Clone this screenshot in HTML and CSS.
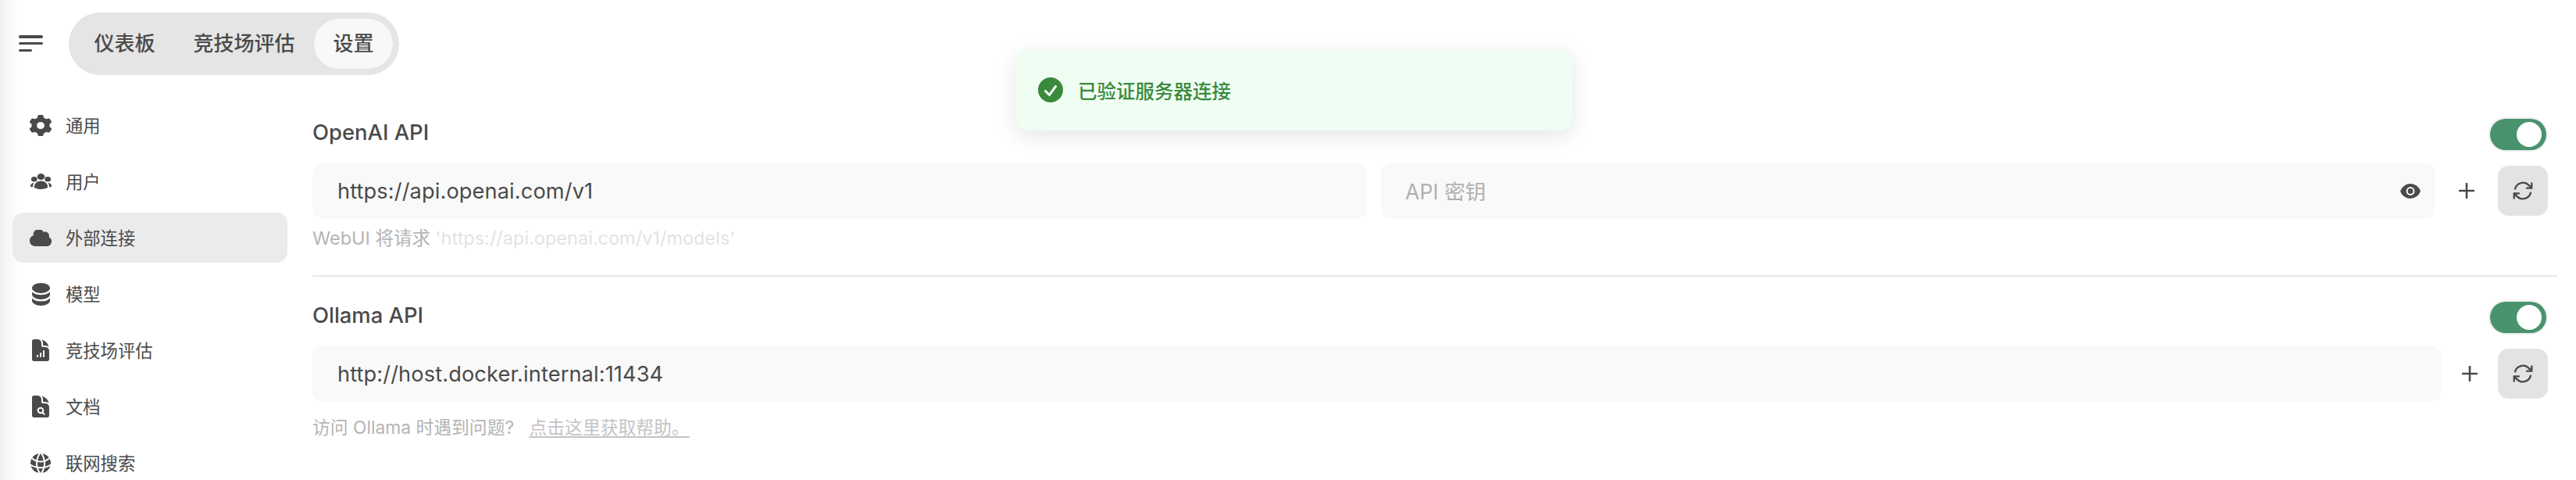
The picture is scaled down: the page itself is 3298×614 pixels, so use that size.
FILE: index.html
```html
<!DOCTYPE html>
<html lang="zh-CN">
<head>
<meta charset="utf-8">
<title>设置</title>
<link rel="stylesheet" href="styles.css">
</head>
<body>
<div class="app">
  <header class="topbar">
    <button class="menu-btn" aria-label="菜单"><span class="bar"></span><span class="bar"></span><span class="bar bar-short"></span></button>
    <nav class="tabs">
      <a class="tab">仪表板</a>
      <a class="tab">竞技场评估</a>
      <a class="tab tab-active">设置</a>
    </nav>
  </header>
  <div class="main">
    <aside class="sidebar">
      <a class="side-item"><span class="side-icon"><svg class="ic-cog" viewBox="1.5 1 17 18" preserveAspectRatio="none"><path fill-rule="evenodd" d="M7.84 1.804A1 1 0 0 1 8.82 1h2.36a1 1 0 0 1 .98.804l.331 1.652a6.993 6.993 0 0 1 1.929 1.115l1.598-.54a1 1 0 0 1 1.186.447l1.18 2.044a1 1 0 0 1-.205 1.251l-1.267 1.113a7.047 7.047 0 0 1 0 2.228l1.267 1.113a1 1 0 0 1 .206 1.25l-1.18 2.045a1 1 0 0 1-1.187.447l-1.598-.54a6.993 6.993 0 0 1-1.929 1.115l-.33 1.652a1 1 0 0 1-.98.804H8.82a1 1 0 0 1-.98-.804l-.331-1.652a6.993 6.993 0 0 1-1.929-1.115l-1.598.54a1 1 0 0 1-1.186-.447l-1.18-2.044a1 1 0 0 1 .205-1.251l1.267-1.114a7.05 7.05 0 0 1 0-2.227L1.821 7.773a1 1 0 0 1-.206-1.25l1.18-2.045a1 1 0 0 1 1.187-.447l1.598.54A6.992 6.992 0 0 1 7.51 3.456l.33-1.652ZM10 13a3 3 0 1 0 0-6 3 3 0 0 0 0 6Z"/></svg></span><span class="side-label">通用</span></a>
      <a class="side-item"><span class="side-icon"><svg class="ic-users" viewBox="1.5 3 21 18.75" preserveAspectRatio="none"><path d="M8.25 6.75a3.75 3.75 0 117.5 0 3.75 3.75 0 01-7.5 0zM15.75 9.75a3 3 0 116 0 3 3 0 01-6 0zM2.25 9.75a3 3 0 116 0 3 3 0 01-6 0zM6.31 15.117A6.745 6.745 0 0112 12a6.745 6.745 0 016.709 7.498.75.75 0 01-.372.568A12.696 12.696 0 0112 21.75c-2.305 0-4.47-.612-6.337-1.684a.75.75 0 01-.372-.568 6.787 6.787 0 011.019-4.38z"/><path d="M5.082 14.254a8.287 8.287 0 00-1.308 5.135 9.687 9.687 0 01-1.764-.44l-.115-.04a.563.563 0 01-.373-.487l-.01-.121a3.75 3.75 0 013.57-4.047zM20.226 19.389a8.287 8.287 0 00-1.308-5.135 3.75 3.75 0 013.57 4.047l-.01.121a.563.563 0 01-.373.486l-.115.04c-.567.2-1.156.349-1.764.441z"/></svg></span><span class="side-label">用户</span></a>
      <a class="side-item side-active"><span class="side-icon"><svg class="ic-cloud" viewBox="1 3.5 18 13.5" preserveAspectRatio="none"><path d="M1 12.5A4.5 4.5 0 0 0 5.5 17H15a4 4 0 0 0 1.866-7.539 3.504 3.504 0 0 0-4.504-4.272A4.5 4.5 0 0 0 4.06 8.235 4.502 4.502 0 0 0 1 12.5Z"/></svg></span><span class="side-label">外部连接</span></a>
      <a class="side-item"><span class="side-icon"><svg class="ic-db" viewBox="3 1 14 18" preserveAspectRatio="none"><path d="M10 1c3.866 0 7 1.79 7 4s-3.134 4-7 4-7-1.79-7-4 3.134-4 7-4zm5.694 8.13c.464-.264.91-.583 1.306-.952V10c0 2.21-3.134 4-7 4s-7-1.79-7-4V8.178c.396.37.842.688 1.306.953C5.838 10.006 7.854 10.5 10 10.5s4.162-.494 5.694-1.37zM3 13.179V15c0 2.21 3.134 4 7 4s7-1.79 7-4v-1.822c-.396.37-.842.688-1.306.953-1.532.875-3.548 1.369-5.694 1.369s-4.162-.494-5.694-1.37A7.009 7.009 0 013 13.179z"/></svg></span><span class="side-label">模型</span></a>
      <a class="side-item"><span class="side-icon"><svg class="ic-doc" viewBox="3.75 1.5 16.5 21" preserveAspectRatio="none"><path fill-rule="evenodd" d="M5.625 1.5c-1.036 0-1.875.84-1.875 1.875v17.25c0 1.035.84 1.875 1.875 1.875h12.75c1.035 0 1.875-.84 1.875-1.875V12.75A3.75 3.75 0 0016.5 9h-1.875a1.875 1.875 0 01-1.875-1.875V5.25A3.75 3.75 0 009 1.5H5.625zM9.75 17.25a.75.75 0 00-1.5 0V18a.75.75 0 001.5 0v-.75zm2.25-3a.75.75 0 01.75.75v3a.75.75 0 01-1.5 0v-3a.75.75 0 01.75-.75zm3.75-1.5a.75.75 0 00-1.5 0V18a.75.75 0 001.5 0v-5.25z"/><path d="M14.25 5.25a5.23 5.23 0 00-1.279-3.434 9.768 9.768 0 016.963 6.963A5.23 5.23 0 0016.5 7.5h-1.875a.375.375 0 01-.375-.375V5.25z"/></svg></span><span class="side-label">竞技场评估</span></a>
      <a class="side-item"><span class="side-icon"><svg class="ic-doc" viewBox="3.75 1.5 16.5 21" preserveAspectRatio="none"><path fill-rule="evenodd" d="M5.625 1.5c-1.036 0-1.875.84-1.875 1.875v17.25c0 1.035.84 1.875 1.875 1.875h12.75c1.035 0 1.875-.84 1.875-1.875V12.75A3.75 3.75 0 0016.5 9h-1.875a1.875 1.875 0 01-1.875-1.875V5.25A3.75 3.75 0 009 1.5H5.625zM12 12.5a3.25 3.25 0 1 0 1.6 6.08l1.37 1.37a.75.75 0 0 0 1.06-1.06l-1.37-1.37A3.25 3.25 0 0 0 12 12.5zm0 1.5a1.75 1.75 0 1 1 0 3.5 1.75 1.75 0 0 1 0-3.5z"/><path d="M14.25 5.25a5.23 5.23 0 00-1.279-3.434 9.768 9.768 0 016.963 6.963A5.23 5.23 0 0016.5 7.5h-1.875a.375.375 0 01-.375-.375V5.25z"/></svg></span><span class="side-label">文档</span></a>
      <a class="side-item"><span class="side-icon"><svg class="ic-globe" viewBox="2.25 2.25 19.5 19.5" preserveAspectRatio="none"><path d="M21.721 12.752a9.711 9.711 0 00-.945-5.003 12.754 12.754 0 01-4.339 2.708 18.991 18.991 0 01-.214 4.772 17.165 17.165 0 005.498-2.477zM14.634 15.55a17.324 17.324 0 00.332-4.647c-.952.227-1.945.347-2.966.347-1.021 0-2.014-.12-2.966-.347a17.515 17.515 0 00.332 4.647 17.385 17.385 0 005.268 0zM9.772 17.119a18.963 18.963 0 004.456 0A17.182 17.182 0 0112 21.724a17.18 17.18 0 01-2.228-4.605zM7.777 15.23a18.87 18.87 0 01-.214-4.774 12.753 12.753 0 01-4.34-2.708 9.711 9.711 0 00-.944 5.004 17.165 17.165 0 005.498 2.477zM21.356 14.752a9.765 9.765 0 01-7.478 6.817 18.64 18.64 0 001.988-4.718 18.627 18.627 0 005.49-2.098zM2.644 14.752c1.682.971 3.53 1.688 5.49 2.099a18.64 18.64 0 001.988 4.718 9.765 9.765 0 01-7.478-6.816zM13.878 2.43a9.755 9.755 0 016.116 3.986 11.267 11.267 0 01-3.746 2.504 18.63 18.63 0 00-2.37-6.49zM12 2.276a17.152 17.152 0 012.805 7.121c-.897.23-1.837.353-2.805.353-.968 0-1.908-.122-2.805-.353A17.151 17.151 0 0112 2.276zM10.122 2.43a18.629 18.629 0 00-2.37 6.49 11.266 11.266 0 01-3.746-2.504 9.754 9.754 0 016.116-3.985z"/></svg></span><span class="side-label">联网搜索</span></a>
    </aside>
    <section class="content">
      <div class="title-row">
        <div class="section-title">OpenAI API</div>
        <div class="toggle"><span class="knob"></span></div>
      </div>
      <div class="input-row">
        <div class="field field-grow"><span>https://api.openai.com/v1</span></div>
        <div class="field field-grow field-key"><span class="placeholder">API 密钥</span>
          <svg class="ic-eye" viewBox="0.5 3 19 14"><path d="M10 12.5a2.5 2.5 0 1 0 0-5 2.5 2.5 0 0 0 0 5Z"/><path fill-rule="evenodd" d="M.664 10.59a1.651 1.651 0 0 1 0-1.186A10.004 10.004 0 0 1 10 3c4.257 0 7.893 2.66 9.336 6.41.147.381.146.804 0 1.186A10.004 10.004 0 0 1 10 17c-4.257 0-7.893-2.66-9.336-6.41ZM14 10a4 4 0 1 1-8 0 4 4 0 0 1 8 0Z"/></svg>
        </div>
        <button class="plus-btn" aria-label="添加"><svg viewBox="0 0 20 20"><path d="M10 1v18M1 10h18"/></svg></button>
        <button class="sync-btn" aria-label="验证"><svg viewBox="0 0 24 24"><path d="M16.023 9.348h4.992v-.001M2.985 19.644v-4.992m0 0h4.992m-4.993 0l3.181 3.183a8.25 8.25 0 0013.803-3.7M4.031 9.865a8.25 8.25 0 0113.803-3.7l3.181 3.182m0-4.991v4.99"/></svg></button>
      </div>
      <div class="help help-first">WebUI 将请求 <span class="help-faint">'https://api.openai.com/v1/models'</span></div>
      <hr class="divider">
      <div class="title-row">
        <div class="section-title">Ollama API</div>
        <div class="toggle"><span class="knob"></span></div>
      </div>
      <div class="input-row input-row-tight">
        <div class="field field-grow"><span>http://host.docker.internal:11434</span></div>
        <button class="plus-btn" aria-label="添加"><svg viewBox="0 0 20 20"><path d="M10 1v18M1 10h18"/></svg></button>
        <button class="sync-btn" aria-label="验证"><svg viewBox="0 0 24 24"><path d="M16.023 9.348h4.992v-.001M2.985 19.644v-4.992m0 0h4.992m-4.993 0l3.181 3.183a8.25 8.25 0 0013.803-3.7M4.031 9.865a8.25 8.25 0 0113.803-3.7l3.181 3.182m0-4.991v4.99"/></svg></button>
      </div>
      <div class="help help-second">访问 Ollama 时遇到问题? <a class="help-link">点击这里获取帮助。</a></div>
    </section>
  </div>
  <div class="toast">
    <svg class="ic-check" viewBox="2 2 16 16"><path fill-rule="evenodd" d="M10 18a8 8 0 1 0 0-16 8 8 0 0 0 0 16Zm3.857-9.809a.75.75 0 0 0-1.214-.882l-3.483 4.79-1.88-1.88a.75.75 0 1 0-1.06 1.061l2.5 2.5a.75.75 0 0 0 1.137-.089l4-5.5Z"/></svg>
    <span>已验证服务器连接</span>
  </div>
</div>
</body>
</html>
```
FILE: styles.css
```css
* { box-sizing: border-box; }
html, body { margin: 0; padding: 0; background: #fff; }
body {
  font-family: Inter, "Noto Sans CJK SC", sans-serif;
  color: #4a4a4a;
  font-size: 27.2px;
}
.app {
  position: relative;
  width: 3298px;
  height: 614px;
  overflow: hidden;
  background: linear-gradient(90deg, #efefef 0, #f7f7f7 10px, #fdfdfd 22px, #fff 32px);
}
.topbar {
  display: flex;
  align-items: center;
  padding: 16px 0 0 24px;
}
.menu-btn {
  width: 31px;
  height: 21px;
  margin-top: -1px;
  padding: 0;
  border: 0;
  background: none;
  display: flex;
  flex-direction: column;
  justify-content: space-between;
  align-items: flex-start;
}
.bar { display: block; width: 31px; height: 3.5px; border-radius: 2px; background: #4a4a4a; }
.bar-short { width: 17px; }
.tabs {
  margin-left: 33px;
  display: flex;
  height: 80px;
  padding: 8px;
  background: #e5e5e5;
  border-radius: 40px;
}
.tab {
  display: flex;
  align-items: center;
  padding: 0 24.5px;
  font-size: 26px;
  font-weight: 500;
  border-radius: 32px;
  line-height: 1;
}
.tab-active { background: #f8f8f8; }
.main { display: flex; margin-top: 32px; }
.sidebar {
  margin-left: 16px;
  width: 352px;
  flex: none;
  display: flex;
  flex-direction: column;
  gap: 8px;
}
.side-item {
  display: flex;
  align-items: center;
  gap: 18px;
  height: 64px;
  flex: none;
  padding-left: 22px;
  font-size: 22.3px;
  border-radius: 14px;
}
.side-label { margin-top: -2px; }
.side-active { background: #ebebeb; }
.side-icon {
  width: 28px;
  height: 30px;
  flex: none;
  display: flex;
  align-items: center;
  justify-content: center;
}
.side-icon svg { display: block; fill: #4a4a4a; }
.ic-cog { width: 28px; height: 27px; }
.ic-users { width: 27px; height: 20px; }
.ic-cloud { width: 28px; height: 21px; }
.ic-db { width: 23px; height: 29px; }
.ic-doc { width: 22px; height: 28px; }
.ic-globe { width: 26px; height: 25px; }
.content {
  margin-left: 32px;
  width: 2874px;
  padding-top: 24px;
  display: flex;
  flex-direction: column;
}
.title-row {
  display: flex;
  align-items: center;
  justify-content: space-between;
  height: 40px;
  padding-right: 14px;
}
.section-title { font-size: 27.4px; font-weight: 500; margin-top: -7px; }
.toggle {
  width: 72px;
  height: 40px;
  border-radius: 20px;
  background: #48936c;
  box-shadow: 0 0 0 2px #eeeeee;
  display: flex;
  align-items: center;
  justify-content: flex-end;
  padding-right: 6px;
}
.knob { width: 32px; height: 32px; border-radius: 50%; background: #fff; }
.input-row {
  display: flex;
  align-items: center;
  margin-top: 16px;
  padding-right: 12px;
  gap: 20px;
}
.input-row-tight { gap: 16px; }
.field {
  height: 72px;
  display: flex;
  align-items: center;
  padding: 0 32px;
  border-radius: 14px;
  background: #f9f9f9;
  min-width: 0;
  letter-spacing: 0.12px;
}
.field-grow { flex: 1 1 0; }
.field-key { margin-left: -2px; justify-content: space-between; }
.placeholder { color: #b0b0b0; font-size: 26.7px; letter-spacing: 0; margin: -2px 0 0 -1px; }
.ic-eye { width: 26px; height: 19px; margin-right: -13px; fill: #4a4a4a; }
.plus-btn {
  width: 40px;
  height: 40px;
  padding: 0;
  border: 0;
  background: none;
  display: flex;
  align-items: center;
  justify-content: center;
}
.plus-btn svg { width: 20px; height: 20px; fill: none; stroke: #4a4a4a; stroke-width: 2.6; stroke-linecap: round; }
.sync-btn {
  width: 64px;
  height: 64px;
  padding: 0;
  border: 0;
  border-radius: 14px;
  background: #e3e3e3;
  display: flex;
  align-items: center;
  justify-content: center;
  flex: none;
}
.sync-btn svg { width: 30px; height: 30px; fill: none; stroke: #4a4a4a; stroke-width: 1.9; stroke-linecap: round; stroke-linejoin: round; }
.help { font-size: 23.5px; line-height: 28px; color: #b4b4b4; }
.help-first { margin-top: 11px; }
.help-second { margin-top: 19px; font-size: 22.8px; }
.help-faint { color: #e3e3e3; }
.help-link { color: #c4c4c4; text-decoration: underline; text-underline-offset: 3px; margin-left: 13px; }
.divider {
  margin: 33px 0 32px;
  border: 0;
  height: 2px;
  background: #e8e8e8;
}
.toast {
  position: absolute;
  left: 1301px;
  top: 63px;
  width: 712px;
  height: 104px;
  border-radius: 14px;
  background: #effdf3;
  box-shadow: 0 7px 28px rgba(0, 0, 0, 0.1);
  display: flex;
  align-items: center;
  gap: 19px;
  padding-left: 28px;
  font-size: 24.5px;
  color: #3a8a3c;
  font-weight: 500;
}
.ic-check { width: 32px; height: 32px; fill: #3a8a3c; flex: none; }
```
